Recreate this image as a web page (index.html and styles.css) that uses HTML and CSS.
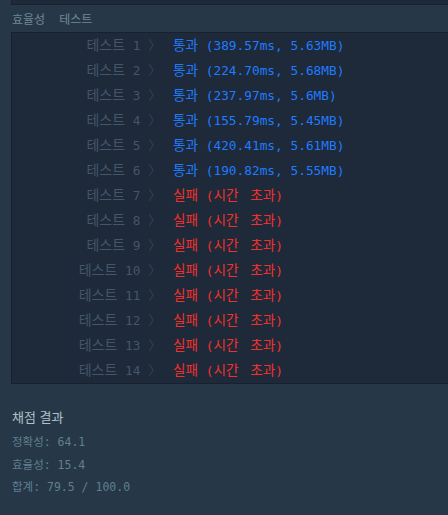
FILE: index.html
```html
<!DOCTYPE html>
<html lang="ko">
<head>
<meta charset="utf-8">
<link rel="stylesheet" href="styles.css">
</head>
<body>
<div class="page">
  <div class="panel panel-top"></div>
  <h6 class="section-label"><span class="tab">효율성</span><span class="tab">테스트</span></h6>
  <div class="panel">
    <table class="results">
      <tbody>
        <tr><td class="title"><span class="ko">테스트</span> 1 <span class="arrow">〉</span></td><td class="res pass"><span class="ko">통과</span> (389.57ms, 5.63MB)</td></tr>
        <tr><td class="title"><span class="ko">테스트</span> 2 <span class="arrow">〉</span></td><td class="res pass"><span class="ko">통과</span> (224.70ms, 5.68MB)</td></tr>
        <tr><td class="title"><span class="ko">테스트</span> 3 <span class="arrow">〉</span></td><td class="res pass"><span class="ko">통과</span> (237.97ms, 5.6MB)</td></tr>
        <tr><td class="title"><span class="ko">테스트</span> 4 <span class="arrow">〉</span></td><td class="res pass"><span class="ko">통과</span> (155.79ms, 5.45MB)</td></tr>
        <tr><td class="title"><span class="ko">테스트</span> 5 <span class="arrow">〉</span></td><td class="res pass"><span class="ko">통과</span> (420.41ms, 5.61MB)</td></tr>
        <tr><td class="title"><span class="ko">테스트</span> 6 <span class="arrow">〉</span></td><td class="res pass"><span class="ko">통과</span> (190.82ms, 5.55MB)</td></tr>
        <tr><td class="title"><span class="ko">테스트</span> 7 <span class="arrow">〉</span></td><td class="res fail"><span class="ko">실패</span> (<span class="ko gap">시간</span> <span class="ko">초과</span>)</td></tr>
        <tr><td class="title"><span class="ko">테스트</span> 8 <span class="arrow">〉</span></td><td class="res fail"><span class="ko">실패</span> (<span class="ko gap">시간</span> <span class="ko">초과</span>)</td></tr>
        <tr><td class="title"><span class="ko">테스트</span> 9 <span class="arrow">〉</span></td><td class="res fail"><span class="ko">실패</span> (<span class="ko gap">시간</span> <span class="ko">초과</span>)</td></tr>
        <tr><td class="title"><span class="ko">테스트</span> 10 <span class="arrow">〉</span></td><td class="res fail"><span class="ko">실패</span> (<span class="ko gap">시간</span> <span class="ko">초과</span>)</td></tr>
        <tr><td class="title"><span class="ko">테스트</span> 11 <span class="arrow">〉</span></td><td class="res fail"><span class="ko">실패</span> (<span class="ko gap">시간</span> <span class="ko">초과</span>)</td></tr>
        <tr><td class="title"><span class="ko">테스트</span> 12 <span class="arrow">〉</span></td><td class="res fail"><span class="ko">실패</span> (<span class="ko gap">시간</span> <span class="ko">초과</span>)</td></tr>
        <tr><td class="title"><span class="ko">테스트</span> 13 <span class="arrow">〉</span></td><td class="res fail"><span class="ko">실패</span> (<span class="ko gap">시간</span> <span class="ko">초과</span>)</td></tr>
        <tr><td class="title"><span class="ko">테스트</span> 14 <span class="arrow">〉</span></td><td class="res fail"><span class="ko">실패</span> (<span class="ko gap">시간</span> <span class="ko">초과</span>)</td></tr>
      </tbody>
    </table>
  </div>
  <div class="summary">
    <h6 class="summary-title">채점 결과</h6>
    <p class="score">정확성: 64.1</p>
    <p class="score">효율성: 15.4</p>
    <p class="score">합계: 79.5 / 100.0</p>
  </div>
</div>
</body>
</html>
```
FILE: styles.css
```css
html, body {
  margin: 0;
  padding: 0;
  background: #263747;
  overflow: hidden;
}
body {
  font-family: "DejaVu Sans Mono", "Noto Sans CJK KR", monospace;
  font-size: 12.8px;
  color: #78909c;
}
.page {
  padding-left: 11px;
  width: 460px;
}
.panel {
  background: #1e2939;
  border: 1px solid #172130;
}
.panel-top {
  height: 4px;
  border-top: none;
}
.section-label {
  margin: 0;
  height: 27px;
  display: flex;
  align-items: center;
  gap: 14px;
  font-family: "Noto Sans CJK KR", sans-serif;
  font-size: 12px;
  font-weight: normal;
  color: #6f8799;
  padding-left: 1px;
}
.results {
  border-collapse: collapse;
}
.results td {
  height: 25px;
  padding: 0;
  line-height: 25px;
  white-space: pre;
}
.ko {
  font-family: "Noto Sans CJK KR", sans-serif;
  font-size: 13.6px;
  line-height: 1;
}
.title .ko {
  font-size: 14px;
}
.gap {
  margin-right: 4px;
}
.title {
  width: 149px;
  text-align: right;
  color: #43566b;
  padding-right: 12px !important;
}
.arrow {
  color: #344456;
  line-height: 1;
}
.pass {
  color: #1f7cff;
}
.fail {
  color: #f2312d;
}
.summary {
  padding-top: 20px;
  padding-left: 1px;
}
.summary-title {
  margin: 0 0 1px;
  font-family: "Noto Sans CJK KR", sans-serif;
  font-size: 13px;
  font-weight: normal;
  color: #b2c0cc;
  line-height: 26px;
}
.score {
  margin: 0;
  font-size: 11.5px;
  line-height: 22.5px;
  color: #5f7f92;
}
```
